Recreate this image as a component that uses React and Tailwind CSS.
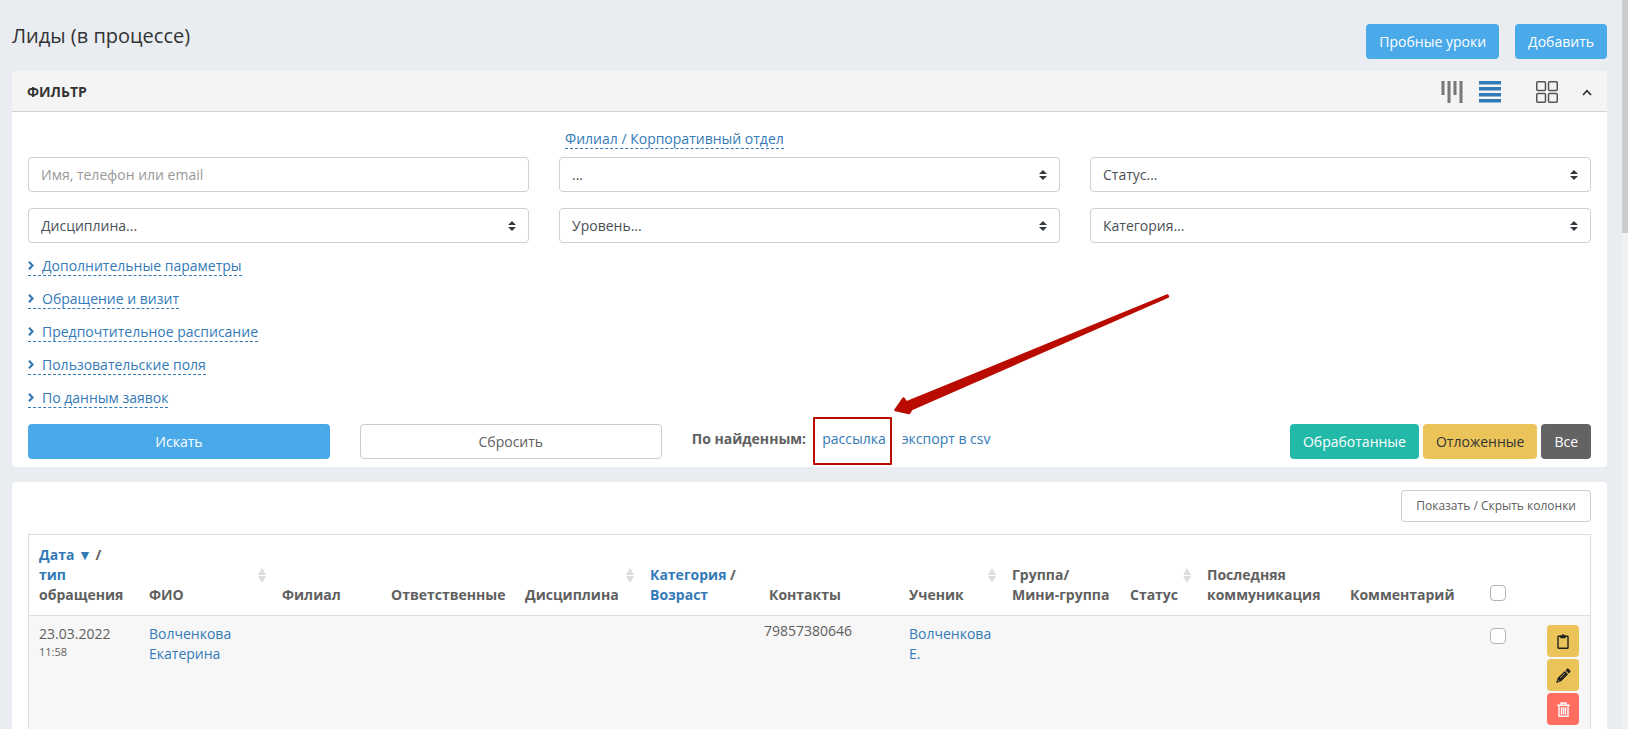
import React, { useState } from 'react'

const sections = [
  'Дополнительные параметры',
  'Обращение и визит',
  'Предпочтительное расписание',
  'Пользовательские поля',
  'По данным заявок',
];

function SelectBox({ label }) {
  return (
    <div className="relative">
      <select
        aria-label={label}
        className="w-full h-[35px] px-3 appearance-none bg-white border border-[#ccd0d7] rounded text-[#495057] outline-none"
      >
        <option>{label}</option>
      </select>
      <svg className="absolute right-[13px] top-[13px] pointer-events-none" width="8" height="10" viewBox="0 0 4 5" fill="#343a40">
        <path d="M2 0L0 2h4zm0 5L0 3h4z" />
      </svg>
    </div>
  );
}

function SortIcon() {
  return (
    <svg className="shrink-0" width="8" height="15" viewBox="0 0 8 15" fill="#dddddd">
      <path d="M4 0L8 7H0zM4 15L0 8h8z" />
    </svg>
  );
}

function Th({ className, sortable, children }) {
  return (
    <th className={`${className} p-0 border-b border-[#dddddd] text-left font-bold align-bottom`}>
      <div className="h-20 px-2.5 py-2.5 flex items-end justify-between">
        <span>{children}</span>
        {sortable && <span className="self-center -mr-1"><SortIcon /></span>}
      </div>
    </th>
  );
}

function CheckBox({ label }) {
  return (
    <input
      type="checkbox"
      aria-label={label}
      className="block w-4 h-4 mx-auto appearance-none bg-white border border-[#adb5bd] rounded"
    />
  );
}

function ActionButton({ title, className, children }) {
  return (
    <button type="button" aria-label={title} className={`${className} w-8 h-8 rounded flex items-center justify-center`}>
      {children}
    </button>
  );
}

function PageHeader() {
  return (
    <div className="flex justify-between items-start pt-6 pb-3">
      <h1 className="text-xl leading-6 text-[#333333]">Лиды (в процессе)</h1>
      <div className="flex gap-4">
        <button type="button" className="h-[35px] px-[13px] rounded bg-[#4aa9e9] text-white">Пробные уроки</button>
        <button type="button" className="h-[35px] px-[13px] rounded bg-[#4aa9e9] text-white">Добавить</button>
      </div>
    </div>
  );
}

function Filter() {
  const [name, setName] = useState('');

  return (
    <section className="bg-white rounded-b pb-2">
      <div className="h-[41px] pt-0.5 px-[15px] flex items-center justify-between bg-[#f4f4f4] border-b border-[#d3d3d3]">
        <h2 className="font-bold text-[#333333]">ФИЛЬТР</h2>
        <div className="flex items-center">
          <button type="button" aria-label="Канбан">
            <svg width="22" height="22" viewBox="0 0 22 22" fill="#777777">
              <path d="M0.500 0h3v14h-3zM6.500 0h3v22h-3zM12.500 0h3v14h-3zM18.500 0h3v22h-3z" />
            </svg>
          </button>
          <button type="button" aria-label="Список" className="ml-4">
            <svg width="22" height="22" viewBox="0 0 22 22" fill="#337ab7">
              <path d="M0 0h22v3.500H0zM0 6h22v3.500H0zM0 12h22v3.500H0zM0 18h22v3.500H0z" />
            </svg>
          </button>
          <button type="button" aria-label="Плитка" className="ml-[35px]">
            <svg width="22" height="22" viewBox="0 0 22 22" fill="none" stroke="#555555" strokeWidth="1.500">
              <rect x="0.750" y="0.750" width="8.700" height="8.700" rx="1" />
              <rect x="12.550" y="0.750" width="8.700" height="8.700" rx="1" />
              <rect x="0.750" y="12.550" width="8.700" height="8.700" rx="1" />
              <rect x="12.550" y="12.550" width="8.700" height="8.700" rx="1" />
            </svg>
          </button>
          <button type="button" aria-label="Свернуть" className="ml-6">
            <svg width="10" height="7" viewBox="0 0 10 7" fill="none" stroke="#333333" strokeWidth="1.800">
              <path d="M1 6l4-4.300L9 6" />
            </svg>
          </button>
        </div>
      </div>

      <form className="px-4" onSubmit={(e) => e.preventDefault()}>
        <div className="grid grid-cols-3 gap-x-[30px] gap-y-4 pt-4">
          <div className="self-end">
            <input
              type="text"
              aria-label="Имя, телефон или email"
              placeholder="Имя, телефон или email"
              value={name}
              onChange={(e) => setName(e.target.value)}
              className="w-full h-[35px] px-3 border border-[#ccd0d7] rounded text-[#495057] placeholder:text-[#999999] outline-none"
            />
          </div>
          <div>
            <div className="mb-2 pl-1.5 flex">
              <a href="#" className="pt-0.5 leading-[18px] text-[#337ab7] border-b border-dashed border-[#337ab7]">Филиал / Корпоративный отдел</a>
            </div>
            <SelectBox label="..." />
          </div>
          <div className="self-end"><SelectBox label="Статус..." /></div>
          <SelectBox label="Дисциплина..." />
          <SelectBox label="Уровень..." />
          <SelectBox label="Категория..." />
        </div>

        <div className="mt-3 mb-4 flex flex-col items-start gap-3">
          {sections.map((s) => (
            <a key={s} href="#" className="pt-0.5 leading-[18px] flex items-center text-[#337ab7] border-b border-dashed border-[#337ab7]">
              <svg className="mr-2 mb-0.5" width="6" height="9" viewBox="0 0 6 9" fill="none" stroke="#337ab7" strokeWidth="2.200">
                <path d="M1 0.800l3.500 3.700L1 8.200" />
              </svg>
              {s}
            </a>
          ))}
        </div>

        <div className="-mx-[15px] grid grid-cols-[5fr_5fr_14fr]">
          <div className="px-[15px]">
            <button type="submit" className="w-full h-[35px] rounded bg-[#4aa9e9] text-white">Искать</button>
          </div>
          <div className="px-[15px]">
            <button type="button" className="w-full h-[35px] rounded border border-[#cccccc] bg-white">Сбросить</button>
          </div>
          <div className="px-[15px] flex justify-between">
            <div className="pt-[5px] flex items-start gap-4">
              <b>По найденным:</b>
              <span className="relative">
                <a href="#" className="text-[#337ab7]">рассылка</a>
                <span className="absolute -left-[9px] -right-1.5 -top-3 h-12 border-2 border-[#b90b00] rounded-[1px]"></span>
                <svg className="absolute left-[70px] -top-[136px] pointer-events-none" width="280" height="124" viewBox="0 0 280 124" fill="#b90b00">
                  <path
                    d="M3.500 117L11.500 105.500 14.500 109.500 275.500 2.500 276 3.500 19.500 116 17 120Z"
                    stroke="#b90b00"
                    strokeWidth="2.500"
                    strokeLinejoin="round"
                  />
                </svg>
              </span>
              <a href="#" className="text-[#337ab7]">экспорт в csv</a>
            </div>
            <div className="flex gap-1">
              <button type="button" className="h-[35px] px-[13px] rounded bg-[#23b9a9] text-white">Обработанные</button>
              <button type="button" className="h-[35px] px-[13px] rounded bg-[#eac459] text-[#333333]">Отложенные</button>
              <button type="button" className="h-[35px] px-[13px] rounded bg-[#636363] text-white">Все</button>
            </div>
          </div>
        </div>
      </form>
    </section>
  );
}

function Leads() {
  return (
    <section className="mt-[15px] px-4 pt-2 bg-white rounded-t">
      <div className="flex justify-end mb-3">
        <button type="button" className="h-8 px-3.5 border border-[#cccccc] rounded bg-white text-xs">
          Показать / Скрыть колонки
        </button>
      </div>
      <table className="w-full table-fixed border border-[#dddddd] border-separate border-spacing-0">
        <thead>
          <tr>
            <Th className="w-[110px]">
              <a href="#" className="text-[#337ab7]">Дата ▼</a> /<br />
              <a href="#" className="text-[#337ab7]">тип</a><br />обращения
            </Th>
            <Th className="w-[133px]" sortable>ФИО</Th>
            <Th className="w-[109px]">Филиал</Th>
            <Th className="w-[134px]">Ответственные</Th>
            <Th className="w-[125px]" sortable>Дисциплина</Th>
            <Th className="w-[119px]">
              <a href="#" className="text-[#337ab7]">Категория</a> /<br />
              <a href="#" className="text-[#337ab7]">Возраст</a>
            </Th>
            <Th className="w-[140px]">Контакты</Th>
            <Th className="w-[103px]" sortable>Ученик</Th>
            <Th className="w-[118px]">Группа/<br /><span className="whitespace-nowrap">Мини-группа</span></Th>
            <Th className="w-[77px]" sortable>Статус</Th>
            <Th className="w-[143px]">Последняя коммуникация</Th>
            <Th className="w-[124px]">Комментарий</Th>
            <th className="w-[67px] pb-3.5 border-b border-[#dddddd] align-bottom"><CheckBox label="Выбрать все" /></th>
            <th className="w-[59px] border-b border-[#dddddd]"></th>
          </tr>
        </thead>
        <tbody>
          <tr className="bg-[#f7f7f7] align-top">
            <td className="px-2.5 py-2">23.03.2022<br /><span className="block text-[11px] leading-4">11:58</span></td>
            <td className="px-2.5 py-2"><a href="#" className="text-[#337ab7]">Волченкова<br />Екатерина</a></td>
            <td></td>
            <td></td>
            <td></td>
            <td></td>
            <td className="p-[5px]">79857380646</td>
            <td className="px-2.5 py-2"><a href="#" className="text-[#337ab7]">Волченкова Е.</a></td>
            <td></td>
            <td></td>
            <td></td>
            <td></td>
            <td className="pt-3"><CheckBox label="Выбрать" /></td>
            <td className="pl-2.5 pr-[11px] pt-[9px] pb-1">
              <div className="flex flex-col gap-0.5 items-end">
                <ActionButton title="Задача" className="bg-[#eac459]">
                  <svg width="12" height="15" viewBox="0 0 12 15" fill="none" stroke="#222222">
                    <rect x="1" y="2.200" width="10" height="12" rx="0.500" strokeWidth="1.400" />
                    <path d="M3.300 4.200V1.600h1.400a1.300 1.300 0 0 1 2.600 0h1.400v2.600z" fill="#222222" stroke="none" />
                  </svg>
                </ActionButton>
                <ActionButton title="Изменить" className="bg-[#eac459]">
                  <svg width="15" height="15" viewBox="0 0 14 14" fill="#222222">
                    <path d="M10.200 0.700q.7-.7 1.400 0l1.700 1.700q.7.7 0 1.400L12 5.100 8.900 2zM8.200 2.700l3.100 3.100-6.500 6.500L0 14l1.700-4.800z" />
                    <path d="M1.600 11.100l1.300 1.300M3.800 9.300l4.400-4.400" stroke="#eac459" strokeWidth="0.700" />
                  </svg>
                </ActionButton>
                <ActionButton title="Удалить" className="bg-[#ff6c60]">
                  <svg width="13" height="15" viewBox="0 0 13 15" fill="none" stroke="#ffffff" strokeWidth="1.400">
                    <path d="M0.300 3.200h12.400M4 3V1h5v2M2 3.500v10.700h9V3.500M4.500 5.300V12.500M6.500 5.300V12.500M8.500 5.300V12.500" />
                  </svg>
                </ActionButton>
              </div>
            </td>
          </tr>
        </tbody>
      </table>
    </section>
  );
}

export default function App() {
  return (
    <div className="h-screen overflow-hidden flex bg-[#e9edf2] font-['Open_Sans',sans-serif] text-sm leading-5 text-[#606060]">
      <main className="flex-1 pl-3 pr-[15px]">
        <PageHeader />
        <Filter />
        <Leads />
      </main>
      <div className="w-1.5 bg-[#f0f0f0]">
        <div className="h-[32%] bg-[#cccccc]"></div>
      </div>
    </div>
  );
}
